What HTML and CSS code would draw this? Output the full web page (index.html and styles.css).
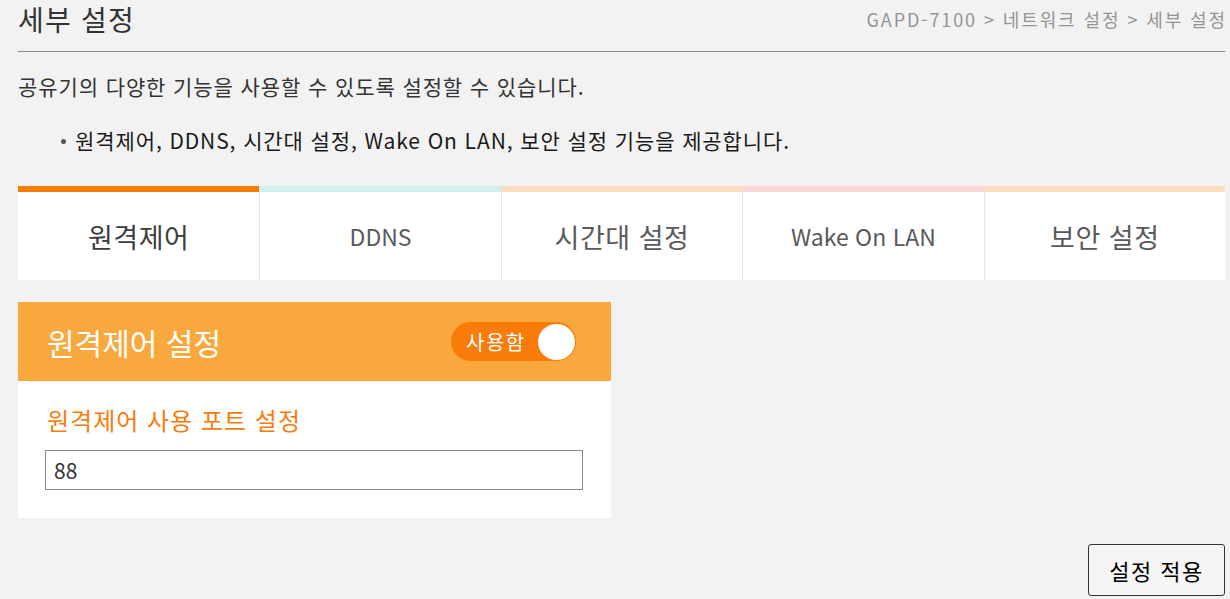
FILE: index.html
```html
<!DOCTYPE html>
<html lang="ko">
<head>
<meta charset="utf-8">
<title>세부 설정</title>
<link rel="stylesheet" href="styles.css">
</head>
<body>
<div class="page">
  <header class="page-head">
    <h1 class="page-title">세부 설정</h1>
    <div class="crumbs">GAPD-7100 &gt; 네트워크 설정 &gt; 세부 설정</div>
  </header>
  <p class="desc">공유기의 다양한 기능을 사용할 수 있도록 설정할 수 있습니다.</p>
  <ul class="notes">
    <li>원격제어, DDNS, 시간대 설정, Wake On LAN, 보안 설정 기능을 제공합니다.</li>
  </ul>
  <nav class="tabs">
    <div class="tab tab-active">원격제어</div>
    <div class="tab tab-en tab-cyan">DDNS</div>
    <div class="tab tab-peach">시간대 설정</div>
    <div class="tab tab-en tab-pink">Wake On LAN</div>
    <div class="tab tab-peach">보안 설정</div>
  </nav>
  <section class="panel">
    <div class="panel-head">
      <h2 class="panel-title">원격제어 설정</h2>
      <div class="toggle"><span class="toggle-label">사용함</span><span class="knob"></span></div>
    </div>
    <div class="panel-body">
      <label class="field-label" for="port">원격제어 사용 포트 설정</label>
      <input class="field" id="port" type="text" value="88">
    </div>
  </section>
  <div class="actions">
    <button class="apply" type="button">설정 적용</button>
  </div>
</div>
</body>
</html>
```
FILE: styles.css
```css
html, body {
  margin: 0;
  padding: 0;
  background: #f2f2f2;
}
body {
  font-family: "Noto Sans CJK KR", "Noto Sans", sans-serif;
  color: #333;
}
.page {
  width: 1207px;
  padding-left: 18px;
}
.page-head {
  display: flex;
  justify-content: space-between;
  align-items: center;
  height: 51px;
  border-bottom: 1px solid #8a8a8a;
}
.page-title {
  margin: 0;
  margin-top: -14px;
  font-size: 28px;
  font-weight: normal;
  color: #333;
  line-height: 36px;
  letter-spacing: 1.2px;
}
.crumbs {
  margin-top: -14px;
  margin-right: -2px;
  font-size: 18px;
  color: #949494;
  letter-spacing: 1.9px;
}
.desc {
  margin: 0;
  padding-top: 21px;
  font-size: 21px;
  line-height: 26px;
  letter-spacing: 0.9px;
  color: #333;
}
.notes {
  margin: 0;
  padding: 28px 0 0 57px;
  list-style: none;
}
.notes li {
  position: relative;
  font-size: 21px;
  line-height: 26px;
  color: #1a1a1a;
  letter-spacing: 0.9px;
}
.notes li::before {
  content: "";
  position: absolute;
  left: -14px;
  top: 12px;
  width: 5px;
  height: 5px;
  border-radius: 50%;
  background: #555;
}
.tabs {
  margin-top: 33px;
  display: grid;
  grid-template-columns: repeat(5, 1fr);
  background: #fff;
}
.tab {
  height: 88px;
  border-top: 6px solid #fddcc0;
  border-left: 1px solid #f3e2d6;
  display: flex;
  align-items: center;
  justify-content: center;
  font-size: 27px;
  letter-spacing: 0.5px;
  color: #5a5a5a;
}
.tab:first-child {
  border-left: none;
}
.tab-en {
  font-size: 23px;
  letter-spacing: 0;
}
.tab-active {
  border-top-color: #f57c00;
  color: #3c3c3c;
}
.tab-cyan {
  border-top-color: #d0f0ee;
}
.tab-peach {
  border-top-color: #fddcc0;
}
.tab-pink {
  border-top-color: #fdd6d8;
}
.panel {
  width: 593px;
  margin-top: 22px;
  background: #fff;
}
.panel-head {
  height: 79px;
  background: #f9a83e;
  display: flex;
  align-items: center;
  justify-content: space-between;
  padding: 0 35px 0 29px;
}
.panel-title {
  margin: 0;
  font-size: 30px;
  font-weight: normal;
  color: #fff;
}
.toggle {
  width: 125px;
  height: 39px;
  box-sizing: border-box;
  border-radius: 20px;
  background: #f97b0a;
  display: flex;
  align-items: center;
  justify-content: space-between;
  padding: 0 1px 0 15px;
}
.toggle-label {
  color: #fff;
  font-size: 20px;
  letter-spacing: 1.5px;
}
.knob {
  width: 37px;
  height: 36px;
  border-radius: 50%;
  background: #fff;
}
.panel-body {
  padding: 24px 28px 28px 27px;
  display: flex;
  flex-direction: column;
}
.field-label {
  font-size: 24px;
  color: #f97b0a;
  line-height: 30px;
  padding-left: 2px;
  letter-spacing: 1px;
}
.field {
  margin-top: 15px;
  width: 538px;
  height: 40px;
  box-sizing: border-box;
  border: 1px solid #8a8a8a;
  padding: 0 8px;
  font-family: "Noto Sans CJK KR", "Noto Sans", sans-serif;
  font-size: 21px;
  color: #333;
  background: #fff;
  outline: none;
}
.actions {
  display: flex;
  justify-content: flex-end;
  margin-top: 26px;
}
.apply {
  width: 137px;
  height: 52px;
  border: 1px solid #333;
  border-radius: 3px;
  background: #f5f5f5;
  font-family: "Noto Sans CJK KR", "Noto Sans", sans-serif;
  font-size: 22px;
  letter-spacing: 1.5px;
  color: #000;
}
```
